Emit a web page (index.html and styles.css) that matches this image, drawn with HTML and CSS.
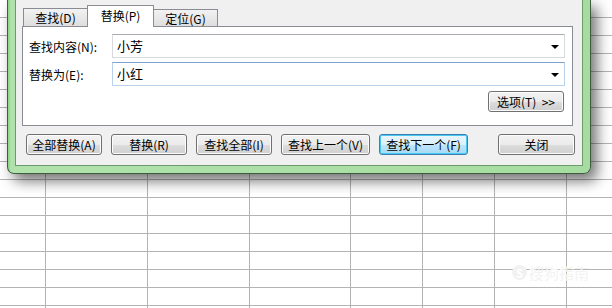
FILE: index.html
```html
<!DOCTYPE html>
<html lang="zh-CN">
<head>
<meta charset="UTF-8">
<title>替换</title>
<link rel="stylesheet" href="styles.css">
</head>
<body>
<div class="sheet">
    <div class="col c1"></div>
    <div class="col c2"></div>
    <div class="col c3"></div>
    <div class="col c4"></div>
    <div class="col c5"></div>
    <div class="col c6"></div>
    <div class="col c7"></div>
    <div class="col rest"></div>
</div>

<div class="watermark"><span class="wm-logo">S</span>搜狗指南</div>

<div class="dialog">
    <div class="dialog-body">
        <div class="tabs">
            <div class="tab">查找(<u>D</u>)</div>
            <div class="tab active">替换(<u>P</u>)</div>
            <div class="tab last">定位(<u>G</u>)</div>
        </div>
        <div class="panel">
            <div class="row">
                <label class="label">查找内容(<u>N</u>):</label>
                <div class="combo">小芳<span class="arrow"></span></div>
            </div>
            <div class="row">
                <label class="label">替换为(<u>E</u>):</label>
                <div class="combo focus">小红<span class="arrow"></span></div>
            </div>
            <div class="options">
                <button class="btn opt">选项(<u>T</u>)&nbsp;&nbsp;&gt;&gt;</button>
            </div>
        </div>
        <div class="buttons">
            <button class="btn">全部替换(<u>A</u>)</button>
            <button class="btn">替换(<u>R</u>)</button>
            <button class="btn">查找全部(<u>I</u>)</button>
            <button class="btn wide">查找上一个(<u>V</u>)</button>
            <button class="btn wide default">查找下一个(<u>F</u>)</button>
            <button class="btn close">关闭</button>
        </div>
    </div>
</div>
</body>
</html>
```

FILE: styles.css
```css
body {
    margin: 0;
    width: 612px;
    height: 308px;
    overflow: hidden;
    position: relative;
    background: #fff;
    font-family: "Noto Sans CJK SC", "Liberation Sans", sans-serif;
    font-size: 12px;
    color: #000;
}
u {
    text-decoration: none;
}

/* spreadsheet behind the dialog */
.sheet {
    display: flex;
    height: 308px;
    background: repeating-linear-gradient(to bottom, transparent 0 17px, #b3b3b3 17px 18px);
}
.col {
    border-right: 1px solid #b3b3b3;
    flex: none;
}
.c1 { width: 45px; }
.c2 { width: 101px; }
.c3 { width: 101px; }
.c4 { width: 100px; }
.c5 { width: 71px; }
.c6 { width: 71px; }
.c7 { width: 71px; }
.rest { flex: 1; border-right: none; }

.watermark {
    position: absolute;
    left: 512px;
    top: 262px;
    font-size: 15px;
    color: #f3f3f3;
    display: flex;
    align-items: center;
    gap: 2px;
}
.wm-logo {
    width: 15px;
    height: 15px;
    border-radius: 50%;
    background: #f1f1f1;
    color: #fff;
    font-size: 11px;
    font-weight: bold;
    display: flex;
    align-items: center;
    justify-content: center;
}

/* the dialog window */
.dialog {
    position: absolute;
    left: 7px;
    top: 0;
    width: 584px;
    height: 174px;
    box-sizing: border-box;
    border: 1px solid #3e5d3c;
    border-top: none;
    border-radius: 0 0 7px 7px;
    padding: 0 7px 7px;
    background: linear-gradient(to right, #8fcf8a, #b1e2ac 3px, #a6dca1);
    box-shadow: 6px 7px 14px rgba(0, 0, 0, 0.55);
}
.dialog-body {
    height: 166px;
    box-sizing: border-box;
    background: #f0f0f0;
    border: 1px solid #6d9a69;
    border-top: none;
}

.tabs {
    display: flex;
    align-items: flex-end;
    height: 26px;
    padding-left: 7px;
}
.tab {
    width: 64px;
    height: 18px;
    box-sizing: border-box;
    border: 1px solid #898c95;
    border-bottom: none;
    border-right: none;
    background: linear-gradient(#f2f2f2, #dedede);
    text-align: center;
    line-height: 17px;
}
.tab.last {
    height: 17px;
    border-right: 1px solid #898c95;
}
.tab.active {
    width: 67px;
    height: 22px;
    margin-bottom: -1px;
    background: #fff;
    border-right: 1px solid #898c95;
    position: relative;
    z-index: 1;
    line-height: 20px;
}
.tab.active + .tab {
    border-left: none;
}

.panel {
    margin-left: 6px;
    width: 551px;
    height: 100px;
    box-sizing: border-box;
    border: 1px solid #898c95;
    background: #fff;
    padding: 7px 7px 0 6px;
}
.row {
    display: flex;
    align-items: center;
    margin-bottom: 4px;
}
.label {
    width: 83px;
    flex: none;
}
.combo {
    width: 453px;
    height: 24px;
    box-sizing: border-box;
    border: 1px solid #d7d9dd;
    border-top-color: #a9abb2;
    background: #fff;
    padding-left: 4px;
    font-size: 13px;
    line-height: 22px;
    position: relative;
}
.combo.focus {
    border-color: #b9d1ea;
    border-top-color: #7da2ce;
}
.arrow {
    position: absolute;
    right: 5px;
    top: 10px;
    border-left: 4px solid transparent;
    border-right: 4px solid transparent;
    border-top: 4px solid #000;
}
.options {
    display: flex;
    justify-content: flex-end;
    margin-top: 5px;
    padding-right: 1px;
}

.btn {
    height: 21px;
    box-sizing: border-box;
    border: 1px solid #707070;
    border-radius: 3px;
    background: linear-gradient(#f2f2f2 0%, #ebebeb 50%, #dddddd 51%, #cfcfcf 100%);
    box-shadow: inset 0 0 0 1px #fcfcfc;
    font-family: inherit;
    font-size: 12px;
    color: #000;
    padding: 0;
    width: 76px;
    line-height: 18px;
}
.btn.opt {
    width: 76px;
}
.btn.wide {
    width: 89px;
}
.btn.default {
    border-color: #3c7fb1;
    background: linear-gradient(#eaf6fd 0%, #d9f0fc 50%, #bee6fd 51%, #a7d9f5 100%);
    box-shadow: inset 0 0 0 1px #48c8f5;
}

.buttons {
    display: flex;
    gap: 9px;
    margin-top: 8px;
    padding: 0 7px 0 10px;
}
.btn.close {
    margin-left: auto;
    width: 77px;
}
```
